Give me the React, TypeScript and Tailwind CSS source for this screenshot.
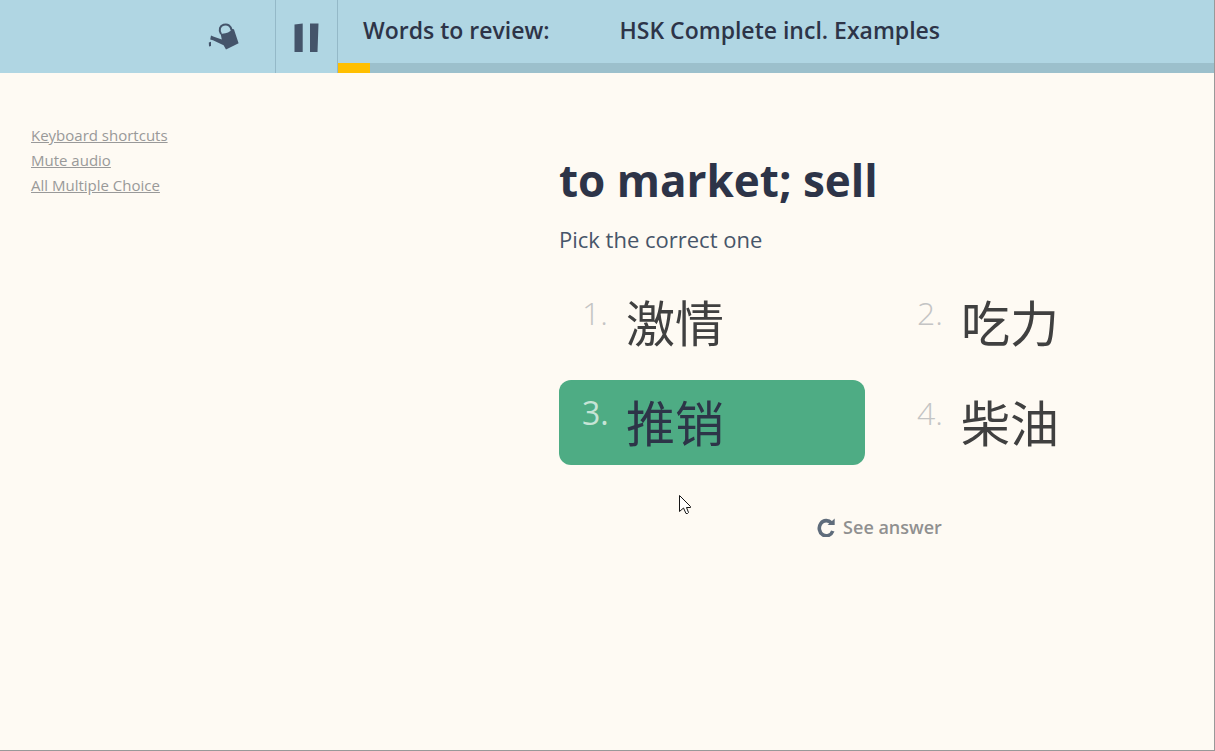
import React from "react";

type Choice = { id: number; text: string; selected?: boolean };

const choices: Choice[] = [
  { id: 1, text: "激情" },
  { id: 2, text: "吃力" },
  { id: 3, text: "推销", selected: true },
  { id: 4, text: "柴油" },
];

const links = ["Keyboard shortcuts", "Mute audio", "All Multiple Choice"];

function WateringCan() {
  return (
    <svg width="32" height="28" viewBox="0 0 32 28" aria-hidden="true">
      <path d="M13 12C10.4 7.5 12 3.8 15.6 2.8C19.6 1.6 23 3.6 23.6 8.5" fill="none" stroke="#44546a" strokeWidth="2" />
      <path d="M12.6 11.6Q20 12.4 24.6 6.8L26 7.4L30.6 21.2L18 27.4L15.6 23.2L5 18.2L2.2 17.6L3 13.6L5.2 14.4L13.8 17.4Z" fill="#44546a" />
      <path d="M0.8 20.4L3 19.8V24L1 24.6Z" fill="#44546a" />
    </svg>
  );
}

function PauseIcon() {
  return (
    <svg width="25" height="30" viewBox="0 0 25 30" aria-hidden="true">
      <path d="M0.5 1.5L8.7 0.5V29H0.5ZM16 0.5H24.5L23.5 29H16Z" fill="#44546a" />
    </svg>
  );
}

function RedoIcon() {
  return (
    <svg width="18" height="20" viewBox="0 0 18 20" aria-hidden="true">
      <path d="M14.4 6A7 7.6 0 1 0 15.8 14" fill="none" stroke="#5f6c7b" strokeWidth="3.6" />
      <path d="M17.7 1.4V8H10.6Z" fill="#5f6c7b" />
    </svg>
  );
}

function Pointer() {
  return (
    <svg className="pointer-events-none absolute top-[495px] left-[679px]" width="13" height="20" viewBox="0 0 13 20" aria-hidden="true">
      <path d="M0.5 0.5V16.5L4.5 13L7 18.5H8.5L9.5 17.5L7.5 12.5H11.5V11.5Z" fill="#ffffff" stroke="#151515" strokeWidth="1" />
    </svg>
  );
}

export default function App() {
  return (
    <div className="relative flex min-h-screen flex-col border-r border-b border-[#999999] bg-[#fefaf3] font-['Open_Sans','Noto_Sans_CJK_SC',sans-serif] text-[#2d3448]">
      <header className="flex h-[73px] bg-[#b0d6e3]">
        <div className="flex w-[276px] shrink-0 justify-end border-r border-[#94b9c8] pt-[22px] pr-[35px]">
          <button type="button" aria-label="Water" className="h-7"><WateringCan /></button>
        </div>
        <button type="button" aria-label="Pause" className="flex w-[62px] shrink-0 justify-center border-r border-[#94b9c8] pt-[23px]">
          <PauseIcon />
        </button>
        <div className="flex min-w-0 flex-1 flex-col">
          <div className="flex flex-1 items-center gap-[70px] pb-1 pl-[25px] text-[23px] leading-[30px] font-semibold">
            <span>Words to review:</span>
            <span>HSK Complete incl. Examples</span>
          </div>
          <div role="progressbar" aria-label="Session progress" aria-valuenow={4} className="h-[10px] bg-[#9cc0cc]">
            <div className="h-full w-8 bg-[#ffbf00]" />
          </div>
        </div>
      </header>
      <div className="flex flex-1">
        <nav className="flex w-[559px] shrink-0 flex-col items-start pt-[50px] pl-[31px] text-[15px] leading-[25px] text-[#999999]">
          {links.map((l) => (
            <a key={l} href="#" className="underline">{l}</a>
          ))}
        </nav>
        <main className="w-[641px] pt-[77px]">
          <h1 className="text-[44px] leading-[60px] font-bold">to market; sell</h1>
          <p className="mt-[14px] text-[22px] leading-[30px] text-[#475569]">Pick the correct one</p>
          <div className="mt-[26px] grid grid-cols-2 gap-x-[29px] gap-y-[15px]">
            {choices.map((c) => (
              <button
                key={c.id}
                type="button"
                className={
                  "flex h-[85px] items-start rounded-[12px] pl-[23px] text-left " +
                  (c.selected ? "bg-[#4eac84] text-[#2d3448]" : "text-[#404040]")
                }
              >
                <span
                  className={
                    "w-11 pt-[11px] text-[32px] leading-[44px] " +
                    (c.selected ? "text-[#c6e4d6]" : "font-light text-[#c4c4c4]")
                  }
                >
                  {c.id}.
                </span>
                <span className="pt-[6px] font-['Noto_Sans_CJK_SC',sans-serif] text-[49px] leading-[70px]">{c.text}</span>
              </button>
            ))}
          </div>
          <div className="mt-[45px] flex justify-center">
            <button type="button" className="flex items-center gap-2 text-[18px] leading-[34px] font-semibold text-[#909090]">
              <RedoIcon />
              See answer
            </button>
          </div>
        </main>
      </div>
      <Pointer />
    </div>
  );
}
